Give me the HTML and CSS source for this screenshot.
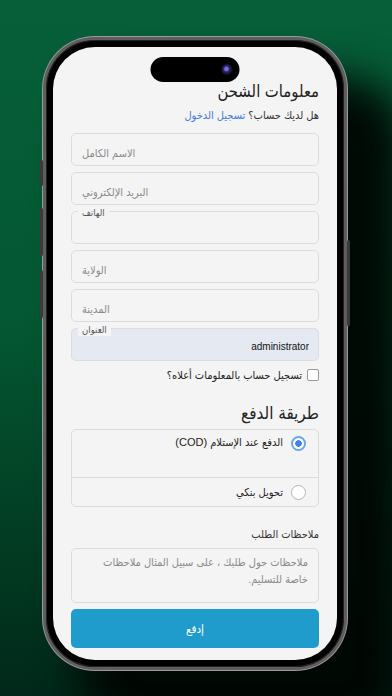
FILE: index.html
```html
<!DOCTYPE html>
<html lang="ar">
<head>
<meta charset="utf-8">
<title>معلومات الشحن</title>
<link rel="stylesheet" href="styles.css">
</head>
<body>
<div class="stage">
  <div class="phone">
    <span class="side-btn btn-action"></span>
    <span class="side-btn btn-vol-up"></span>
    <span class="side-btn btn-vol-down"></span>
    <span class="side-btn btn-power"></span>
    <div class="screen">
      <div class="island"><span class="lens"></span></div>
      <form class="content" dir="rtl">
        <h1 class="title">معلومات الشحن</h1>
        <p class="login">هل لديك حساب؟ <a href="#">تسجيل الدخول</a></p>
        <div class="fields">
          <div class="field"><input class="input" placeholder="الاسم الكامل"></div>
          <div class="field"><input class="input" placeholder="البريد الإلكتروني"></div>
          <div class="field"><input class="input"><label class="float-label">الهاتف</label></div>
          <div class="field"><input class="input" placeholder="الولاية"></div>
          <div class="field"><input class="input" placeholder="المدينة"></div>
          <div class="field"><input class="input input-filled" value="administrator"><label class="float-label">العنوان</label></div>
        </div>
        <label class="check-row"><span class="checkbox"></span><span>تسجيل حساب بالمعلومات أعلاه؟</span></label>
        <h2 class="section-title">طريقة الدفع</h2>
        <div class="pay-box">
          <div class="pay-opt pay-opt-main"><span class="radio radio-on"></span><span>الدفع عند الإستلام (COD)</span></div>
          <div class="pay-opt"><span class="radio"></span><span>تحويل بنكي</span></div>
        </div>
        <p class="notes-label">ملاحظات الطلب</p>
        <div class="notes">ملاحظات حول طلبك ، على سبيل المثال ملاحظات خاصة للتسليم.</div>
        <button type="button" class="pay-btn">إدفع</button>
      </form>
    </div>
  </div>
</div>
</body>
</html>
```
FILE: styles.css
```css
* { box-sizing: border-box; }
html, body {
  margin: 0;
  width: 392px;
  height: 696px;
  overflow: hidden;
}
body {
  background: linear-gradient(180deg, #065f39 0%, #045833 45%, #023a21 80%, #01281a 100%);
  font-family: "Liberation Sans", "DejaVu Sans Condensed", "DejaVu Sans", sans-serif;
  color: #222;
}
.stage {
  padding: 37px 0 0 43px;
}
.phone {
  position: relative;
  width: 304px;
  height: 633px;
  padding: 7px;
  background: #000;
  border: 3px solid #5e5e5e;
  border-radius: 52px;
  box-shadow: inset 0 0 0 1px #222, 0 0 0 1px #9a9a9a, 48px 52px 40px 12px rgba(0, 6, 3, 0.95);
}
.side-btn {
  position: absolute;
  width: 3px;
  background: #3a3a3a;
  border-radius: 2px;
}
.btn-action { left: -6px; top: 120px; height: 26px; }
.btn-vol-up { left: -6px; top: 168px; height: 48px; }
.btn-vol-down { left: -6px; top: 230px; height: 48px; }
.btn-power { right: -6px; top: 200px; height: 86px; }
.screen {
  position: relative;
  width: 100%;
  height: 100%;
  background: #f4f4f4;
  border-radius: 42px;
  overflow: hidden;
}
.island {
  position: absolute;
  top: 10px;
  left: 50%;
  transform: translateX(-50%);
  width: 89px;
  height: 25px;
  background: #000;
  border-radius: 13px;
}
.lens {
  position: absolute;
  right: 7px;
  top: 7px;
  width: 11px;
  height: 11px;
  border-radius: 50%;
  background: radial-gradient(circle at 45% 45%, #7a6cf0 0 18%, #2a2660 35%, #14142a 60%, #0b0b12 100%);
}
.content {
  display: flex;
  flex-direction: column;
  padding: 33px 18px 0 18px;
}
.title {
  margin: 0;
  font-size: 16.5px;
  line-height: 22px;
  font-weight: 500;
  color: #222;
}
.login {
  margin: 4px 0 9px;
  font-size: 11px;
  line-height: 18px;
  color: #333;
}
.login a {
  color: #3d7be0;
  text-decoration: none;
}
.fields {
  display: flex;
  flex-direction: column;
  gap: 6px;
}
.field {
  position: relative;
  height: 33px;
}
.input {
  display: block;
  width: 100%;
  height: 100%;
  margin: 0;
  padding: 6px 10px 0;
  border: 1px solid #dcdcdc;
  border-radius: 5px;
  background: #f4f4f4;
  font: inherit;
  font-size: 11px;
  color: #222;
  text-align: left;
  outline: none;
}
.input::placeholder {
  color: #8a8a8a;
}
.input-filled {
  background: #e4e9f2;
  text-align: right;
  padding: 4px 9px 0;
  font-size: 10px;
  color: #111;
}
.float-label {
  position: absolute;
  top: -4px;
  left: 7px;
  padding: 0 4px;
  background: #f4f4f4;
  font-size: 9.5px;
  line-height: 12px;
  color: #555;
}
.check-row {
  display: flex;
  align-items: center;
  gap: 5px;
  margin-top: 6px;
  height: 16px;
  font-size: 11px;
  color: #222;
}
.checkbox {
  width: 12px;
  height: 12px;
  border: 1px solid #9a9a9a;
  border-radius: 2px;
  background: #fff;
}
.section-title {
  margin: 20px 0 4px;
  font-size: 17px;
  line-height: 22px;
  font-weight: 500;
  color: #222;
}
.pay-box {
  border: 1px solid #dcdcdc;
  border-radius: 5px;
}
.pay-opt {
  display: flex;
  align-items: center;
  gap: 8px;
  height: 28px;
  padding: 0 12px 0 0;
  font-size: 11px;
  color: #222;
}
.pay-opt-main {
  height: 48px;
  align-items: flex-start;
  padding-top: 6px;
  border-bottom: 1px solid #dcdcdc;
}
.radio {
  width: 15px;
  height: 15px;
  border-radius: 50%;
  border: 1px solid #b5b5b5;
  background: #fff;
  flex: none;
}
.radio-on {
  border: 2px solid #6aa6ee;
  background: radial-gradient(circle, #3a86e6 0 3px, #fff 3.5px);
}
.notes-label {
  margin: 18px 0 5px;
  font-size: 11px;
  line-height: 18px;
  color: #333;
}
.notes {
  height: 55px;
  padding: 5px 10px 0;
  border: 1px solid #dcdcdc;
  border-radius: 5px;
  font-size: 11px;
  line-height: 17px;
  color: #8a8a8a;
}
.pay-btn {
  margin-top: 6px;
  height: 39px;
  width: 100%;
  border: none;
  border-radius: 5px;
  background: #1f9ccb;
  color: #fff;
  font: inherit;
  font-size: 11.5px;
}
```
